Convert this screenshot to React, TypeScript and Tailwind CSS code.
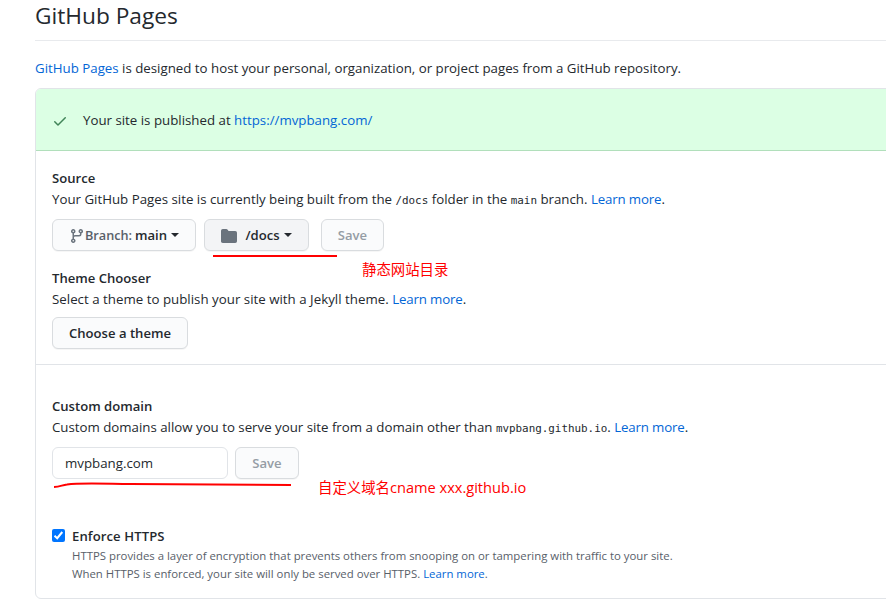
import type { ReactNode } from "react";

function Link({ children }: { children: ReactNode }) {
  return (
    <a href="#" className="text-[#0366d6]">
      {children}
    </a>
  );
}

function LearnMore() {
  return (
    <a href="#" className="tracking-[-0.15px] text-[#0366d6]">
      Learn more
    </a>
  );
}

function Code({ children }: { children: ReactNode }) {
  return (
    <code className="font-['DejaVu_Sans_Mono','Liberation_Mono',monospace] text-[10.9px]">
      {children}
    </code>
  );
}

function Heading({ children }: { children: ReactNode }) {
  return <h3 className="h-[21px] text-[13.1px] leading-[21px] font-[590]">{children}</h3>;
}

function Caret() {
  return (
    <span className="h-0 w-0 border-x-4 border-t-4 border-x-transparent border-t-[#24292e]" />
  );
}

const button =
  "flex h-8 shrink-0 items-center rounded-md border border-[#d9dcdf] text-[13.1px] leading-5 font-[590] shadow-[0_1px_0_rgba(27,31,35,0.04)]";

export default function App() {
  return (
    <main className="relative h-[599px] w-[886px] overflow-hidden bg-white pl-[35px] font-['Open_Sans','Noto_Sans','Noto_Sans_CJK_SC',sans-serif] text-[13.29px] leading-[21px] whitespace-nowrap text-[#24292e]">
      <h2 className="h-[41px] border-b border-[#e8eaed] text-[22.7px] leading-[32px]">
        GitHub Pages
      </h2>
      <p className="mt-[17px]">
        <Link>GitHub Pages</Link> is designed to host your personal, organization, or project
        pages from a GitHub repository.
      </p>

      <section className="mt-[9px] h-[511px] w-[870px] overflow-hidden rounded-md border border-[#e1e4e8]">
        <div className="flex h-[62px] items-center border-b border-[#b1dfbb] bg-[#dcffe4] pl-4">
          <svg width="16" height="16" viewBox="0 0 16 16" fill="#418458" className="mt-0.5">
            <path d="M13.78 4.22a.75.75 0 010 1.06l-7.25 7.25a.75.75 0 01-1.06 0L2.22 9.28a.75.75 0 011.06-1.06L6 10.94l6.72-6.72a.75.75 0 011.06 0z" />
          </svg>
          <p className="mt-0.5 ml-[15px]">
            Your site is published at <Link>https://mvpbang.com/</Link>
          </p>
        </div>

        <div className="h-[214px] border-b border-[#e1e4e8] pt-[17px] pl-4">
          <Heading>Source</Heading>
          <p>
            Your GitHub Pages site is currently being built from the <Code>/docs</Code> folder in
            the <Code>main</Code> branch. <LearnMore />.
          </p>
          <div className="mt-2 flex">
            <button className={`${button} w-36 bg-[#fafbfc] pl-4`}>
              <svg width="16" height="16" viewBox="0 0 16 16" fill="#6a737d" className="mt-px shrink-0">
                <path
                  fillRule="evenodd"
                  d="M11.75 2.5a.75.75 0 100 1.5.75.75 0 000-1.5zm-2.25.75a2.25 2.25 0 113 2.122V6A2.5 2.5 0 0110 8.5H6a1 1 0 00-1 1v1.128a2.251 2.251 0 11-1.5 0V5.372a2.25 2.25 0 111.5 0v1.836A2.492 2.492 0 016 7h4a1 1 0 001-1v-.628A2.25 2.25 0 019.5 3.25zM4.25 12a.75.75 0 100 1.5.75.75 0 000-1.5zM3.5 3.25a.75.75 0 111.5 0 .75.75 0 01-1.5 0z"
                />
              </svg>
              <span className="mr-[3px] w-[47px] text-[12.7px] text-[#586069]">Branch:</span>
              <span className="mr-1 w-8">main</span>
              <Caret />
            </button>
            <button className={`${button} ml-2 w-[105px] bg-[#f3f4f6] pl-4`}>
              <svg width="16" height="16" viewBox="0 0 16 16" fill="#6a737d" className="mt-0.5 shrink-0">
                <path d="M1.75 1A1.75 1.75 0 000 2.75v10.5C0 14.216.784 15 1.75 15h12.5A1.75 1.75 0 0016 13.25v-8.5A1.75 1.75 0 0014.25 3h-6.5a.25.25 0 01-.2-.1l-.9-1.2c-.33-.44-.85-.7-1.4-.7h-3.5z" />
              </svg>
              <span className="mr-1 ml-2 w-[35px]">/docs</span>
              <Caret />
            </button>
            <button className={`${button} ml-3 w-[63px] justify-center bg-[#fafbfc] text-[#959da5]`}>
              Save
            </button>
          </div>
          <div className="mt-[17px]">
            <Heading>Theme Chooser</Heading>
            <p className="tracking-[0.015px]">
              Select a theme to publish your site with a Jekyll theme. <LearnMore />.
            </p>
            <button className={`${button} mt-[7px] w-[136px] justify-center bg-[#fafbfc]`}>
              Choose a theme
            </button>
          </div>
        </div>

        <div className="pt-[31px] pl-4">
          <Heading>Custom domain</Heading>
          <p className="tracking-[-0.01px]">
            Custom domains allow you to serve your site from a domain other than{" "}
            <Code>mvpbang.github.io</Code>. <LearnMore />.
          </p>
          <div className="mt-2 flex">
            <input
              className="h-8 w-44 rounded-md border border-[#e1e4e8] px-3 text-[13.3px] outline-none"
              defaultValue="mvpbang.com"
            />
            <button className={`${button} ml-[7px] w-16 justify-center bg-[#fafbfc] text-[#959da5]`}>
              Save
            </button>
          </div>
          <div className="mt-[47px] flex">
            <span className="mt-[3px] flex h-[13px] w-[13px] items-center justify-center rounded-[2px] bg-[#0075ff]">
              <svg width="11" height="11" viewBox="0 0 11 11" fill="none" stroke="white" strokeWidth="2">
                <path d="M1.5 5.8 4.2 8.2 9.3 2" />
              </svg>
            </span>
            <div className="ml-[7px]">
              <Heading>
                <span className="tracking-[0.1px]">Enforce HTTPS</span>
              </Heading>
              <p className="text-[11.38px] leading-[18px] text-[#586069]">
                HTTPS provides a layer of encryption that prevents others from snooping on or
                tampering with traffic to your site.
                <br />
                When HTTPS is enforced, your site will only be served over HTTPS.{" "}
                <Link>Learn more</Link>.
              </p>
            </div>
          </div>
        </div>
      </section>

      <svg
        className="pointer-events-none absolute inset-0"
        width="886"
        height="599"
        fill="none"
        stroke="#ff0000"
        strokeWidth="2"
      >
        <path d="M213 256H337" />
        <path d="M54 487C60 487 62 485 67 484.4C80 482.5 100 483.5 130 484C180 484.6 230 485 291 485" />
      </svg>
      <span className="absolute top-[258px] left-[362px] font-['Noto_Sans_CJK_SC',sans-serif] text-[14.4px] text-[#ff0000]">
        静态网站目录
      </span>
      <span className="absolute top-[476px] left-[318px] text-[14.6px] text-[#ff0000]">
        <span className="font-['Noto_Sans_CJK_SC',sans-serif] text-[14.4px]">自定义域名</span>cname
        xxx.github.io
      </span>
    </main>
  );
}
